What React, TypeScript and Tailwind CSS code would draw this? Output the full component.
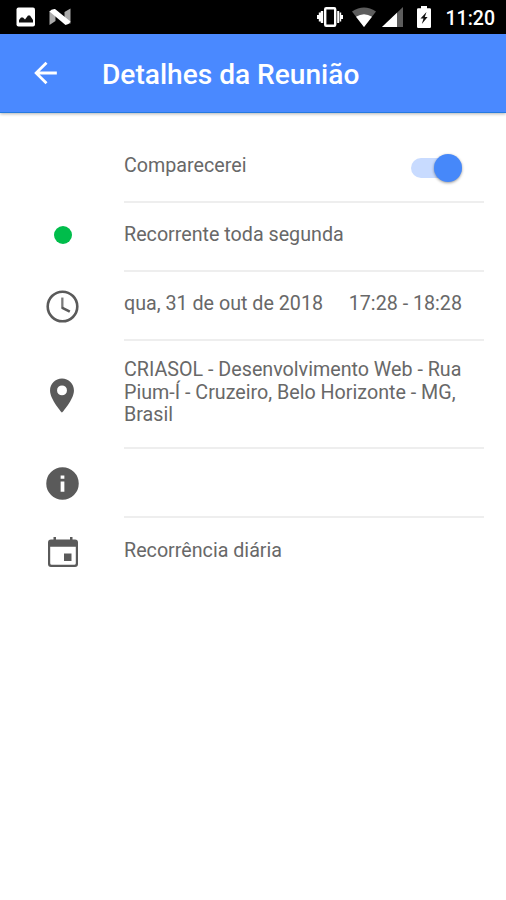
import { FC, ReactNode, useState } from "react";

interface RowProps {
  icon?: ReactNode;
  children?: ReactNode;
  className: string;
  last?: boolean;
}

const StatusBar: FC = () => (
  <div className="flex h-[34px] items-center justify-between bg-black pl-4 pr-[11px] text-white">
    <div className="flex items-center gap-[13px]">
      <svg width="20" height="20" viewBox="0 0 20 20">
        <rect x="0.5" y="0.5" width="18.5" height="19" rx="2" fill="#fff" />
        <path d="M3 15.5V13l2-2.500h2l2 2 3-4h2l3 4.500v2.500z" fill="#111" />
      </svg>
      <svg width="22" height="18" viewBox="0 0 22 18">
        <path d="M.5 3v14l6-4V3zM15.500 4l6-3.500v15h-6z" fill="#aaa" />
        <path d="M.5 3.500Q2 .8 6 1l15.500 12.500q-1.500 3-5 3.500Z" fill="#fff" />
      </svg>
    </div>
    <div className="flex items-center">
      <svg className="mr-[9px]" width="26" height="20" viewBox="0 0 26 20">
        <rect x="8.200" y="1.200" width="10" height="17.600" rx="1" fill="none" stroke="#fff" strokeWidth="2.400" />
        <path d="M0 8h1.800v4H0zM1.800 5.500h2v9h-2zM3.800 4h2.400v12H3.800zM20.200 4h2v12h-2zM22.700 5.500h1.500v9h-1.500zM24.200 8H26v4h-1.800z" fill="#fff" />
      </svg>
      <svg className="mr-[6px]" width="24" height="20" viewBox="0 0 24 20">
        <path d="M0 4.500Q12-3.500 24 4.500L12 20z" fill="#5d5d5d" />
        <path d="M4 9.800Q12 4.800 20 9.800L12 20z" fill="#fff" />
      </svg>
      <svg className="mr-[14px]" width="21" height="20" viewBox="0 0 21 20">
        <path d="M0 20 21 0v20z" fill="#5d5d5d" />
        <path d="M0 20 15 5.700V20z" fill="#fff" />
      </svg>
      <svg className="mr-[15px]" width="14" height="22" viewBox="0 0 14 22">
        <path d="M4 0h6v2.200h2.800Q14 2.200 14 3.400v17.400Q14 22 12.800 22H1.200Q0 22 0 20.800V3.400Q0 2.200 1.200 2.200H4z" fill="#fff" />
        <path d="M9.500 6 3.500 12.500h3L4.800 18l5.800-7H7.800z" fill="#111" />
      </svg>
      <span className="pt-[3px] text-[19.5px] font-medium leading-none">11:20</span>
    </div>
  </div>
);

const Header: FC = () => (
  <header className="relative flex h-[79px] items-center border-b border-[#267ae0] bg-[#4a89ff] pl-[31px] text-white shadow-[0_1px_3px_rgba(0,0,0,0.3)]">
    <button type="button" aria-label="Voltar">
      <svg width="29" height="34" viewBox="2 0 20 24" fill="currentColor">
        <path d="M20 11H7.830l5.590-5.590L12 4l-8 8 8 8 1.410-1.410L7.830 13H20v-2z" />
      </svg>
    </button>
    <h1 className="ml-[42px] pt-[3px] text-[28.1px] font-medium leading-8">Detalhes da Reunião</h1>
  </header>
);

const Row: FC<RowProps> = ({ icon, children, className, last }) => (
  <div className={`flex pr-[22px] ${className}`}>
    <div className="flex w-[124px] shrink-0 items-center justify-center text-[#5a5a5a]">{icon}</div>
    <div className={`flex flex-1 items-center ${last ? "" : "border-b-2 border-[#eeeeee]"}`}>{children}</div>
  </div>
);

const ClockIcon: FC = () => (
  <svg width="39" height="39" viewBox="0 0 24 24" fill="none" stroke="currentColor">
    <circle cx="12" cy="12" r="9.100" strokeWidth="1.600" />
    <path d="M11.900 6.500v6.500" strokeWidth="1.400" opacity="0.8" />
    <path d="M11.600 12.700l4.900 2.500" strokeWidth="1.600" />
  </svg>
);

const PinIcon: FC = () => (
  <svg width="42" height="41" viewBox="0 0 24 24" fill="currentColor">
    <path d="M12 2C8.130 2 5 5.130 5 9c0 5.250 7 13 7 13s7-7.750 7-13c0-3.870-3.130-7-7-7zm0 9.900a2.900 2.900 0 1 1 0-5.800 2.900 2.900 0 0 1 0 5.800z" />
  </svg>
);

const InfoIcon: FC = () => (
  <svg width="39" height="39" viewBox="0 0 24 24" fill="currentColor">
    <path d="M12 2a10 10 0 1 0 0 20 10 10 0 0 0 0-20zm1.150 15h-2.300v-6.200h2.300V17zm0-8h-2.300V7h2.300v2z" />
  </svg>
);

const CalendarIcon: FC = () => (
  <svg className="mb-[2px] ml-px" width="30" height="30" viewBox="0 0 30 30">
    <path d="M5.500 0h2.500v2.500h14V0h2.500v2.500H27q3 0 3 3V27q0 3-3 3H3q-3 0-3-3V5.500q0-3 3-3h2.500zM2.200 9.800v16.400q0 1.600 1.600 1.600h22.400q1.600 0 1.600-1.600V9.800z" fill="currentColor" />
    <path d="M16 16.500h7.500V24H16z" fill="currentColor" />
  </svg>
);

const App: FC = () => {
  const [going, setGoing] = useState<boolean>(true);

  return (
    <div className="min-h-[900px] w-full bg-white font-[Roboto,sans-serif] text-[19.7px] leading-[22px] text-[#686868]">
      <StatusBar />
      <Header />
      <main>
        <Row className="h-[90px] pt-[20px]">
          <span className="pb-[2px]">Comparecerei</span>
          <button
            type="button"
            role="switch"
            aria-checked={going}
            onClick={() => setGoing(!going)}
            className={`ml-auto mr-[22px] mt-px flex h-5 w-[51px] items-center rounded-full ${going ? "justify-end bg-[#c8dbff]" : "bg-gray-300"}`}
          >
            <span className="size-[28px] rounded-full bg-[#4688fa] shadow-[0_1px_3px_rgba(0,0,0,0.4)]" />
          </button>
        </Row>
        <Row className="h-[69px]" icon={<span className="ml-[2px] mt-[-6px] size-[18px] rounded-full bg-[#00bd4b]" />}>
          <span className="pb-[3px]">Recorrente toda segunda</span>
        </Row>
        <Row className="h-[69px]" icon={<ClockIcon />}>
          <span className="pb-[3px]">qua, 31 de out de 2018</span>
          <span className="ml-auto mr-[22px] pb-[3px]">17:28 - 18:28</span>
        </Row>
        <Row className="h-[108px]" icon={<PinIcon />}>
          <p className="whitespace-nowrap pb-[2px] leading-[22.4px]">
            CRIASOL - Desenvolvimento Web - Rua
            <br />
            Pium-Í - Cruzeiro, Belo Horizonte - MG,
            <br />
            Brasil
          </p>
        </Row>
        <Row className="h-[69px]" icon={<InfoIcon />} />
        <Row className="h-[69px]" icon={<CalendarIcon />} last>
          <span className="pb-[3px]">Recorrência diária</span>
        </Row>
      </main>
    </div>
  );
};

export default App;
